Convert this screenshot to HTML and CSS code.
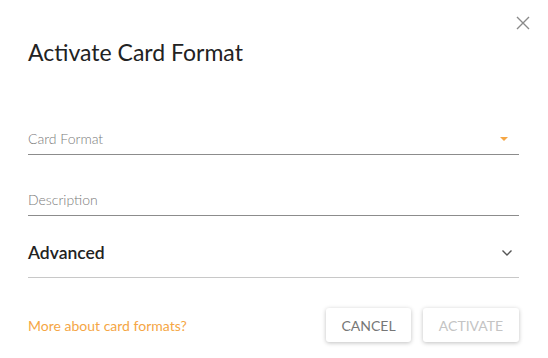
FILE: index.html
```html
<!DOCTYPE html>
<html lang="en">
<head>
  <meta charset="UTF-8">
  <title>Activate Card Format</title>
  <link rel="stylesheet" href="styles.css">
</head>
<body>
  <div class="dialog">
    <button class="close" aria-label="Close">
      <svg width="14" height="14" viewBox="0 0 14 14"><path d="M1 1L13 13M13 1L1 13" stroke="#8a8a8a" stroke-width="1.4" fill="none"/></svg>
    </button>
    <h1 class="title">Activate Card Format</h1>

    <div class="field select">
      <span class="placeholder">Card Format</span>
      <span class="caret"></span>
    </div>

    <div class="field">
      <span class="placeholder">Description</span>
    </div>

    <div class="advanced">
      <span>Advanced</span>
      <svg width="12" height="8" viewBox="0 0 12 8"><path d="M1.5 1.5L6 6L10.5 1.5" stroke="#555" stroke-width="1.4" fill="none"/></svg>
    </div>

    <div class="footer">
      <a class="link" href="#">More about card formats?</a>
      <div class="actions">
        <button class="btn">CANCEL</button>
        <button class="btn disabled">ACTIVATE</button>
      </div>
    </div>
  </div>
</body>
</html>
```

FILE: styles.css
```css
body {
  margin: 0;
  background: #fff;
  font-family: Lato, "Open Sans", sans-serif;
}

.dialog {
  position: relative;
  width: 548px;
  height: 358px;
  padding: 0 29px 0 28px;
  box-sizing: border-box;
}

.close {
  position: absolute;
  top: 16px;
  right: 18px;
  border: none;
  background: none;
  padding: 0;
  cursor: pointer;
}

.title {
  margin: 0;
  padding-top: 38px;
  font-size: 23px;
  font-weight: 400;
  color: #222;
  line-height: 28px;
}

.field {
  display: flex;
  align-items: center;
  justify-content: space-between;
  height: 30px;
  border-bottom: 1px solid #8c8c8c;
  margin-top: 30px;
}

.field.select {
  margin-top: 58px;
}

.placeholder {
  font-size: 14px;
  font-weight: 300;
  color: #7a7a7a;
  margin-bottom: 2px;
}

.caret {
  width: 0;
  height: 0;
  border-left: 4px solid transparent;
  border-right: 4px solid transparent;
  border-top: 4px solid #f5a645;
  margin-right: 11px;
}

.advanced {
  display: flex;
  align-items: center;
  justify-content: space-between;
  padding: 26px 6px 13px 0;
  line-height: 22px;
  border-bottom: 1px solid #c8c8c8;
  font-size: 17.5px;
  font-weight: 600;
  color: #222;
}

.footer {
  display: flex;
  align-items: center;
  justify-content: space-between;
  margin-top: 30px;
}

.link {
  font-size: 14px;
  color: #f5a645;
  text-decoration: none;
}

.actions {
  display: flex;
  gap: 12px;
}

.btn {
  font-family: Lato, sans-serif;
  font-size: 14px;
  color: #777;
  background: #fff;
  border: none;
  border-radius: 3px;
  height: 34px;
  width: 85px;
  padding: 0;
  box-shadow: 0 1px 4px rgba(0, 0, 0, 0.25);
  cursor: pointer;
}

.btn.disabled {
  color: #c4c4c4;
  width: 96px;
}
```
